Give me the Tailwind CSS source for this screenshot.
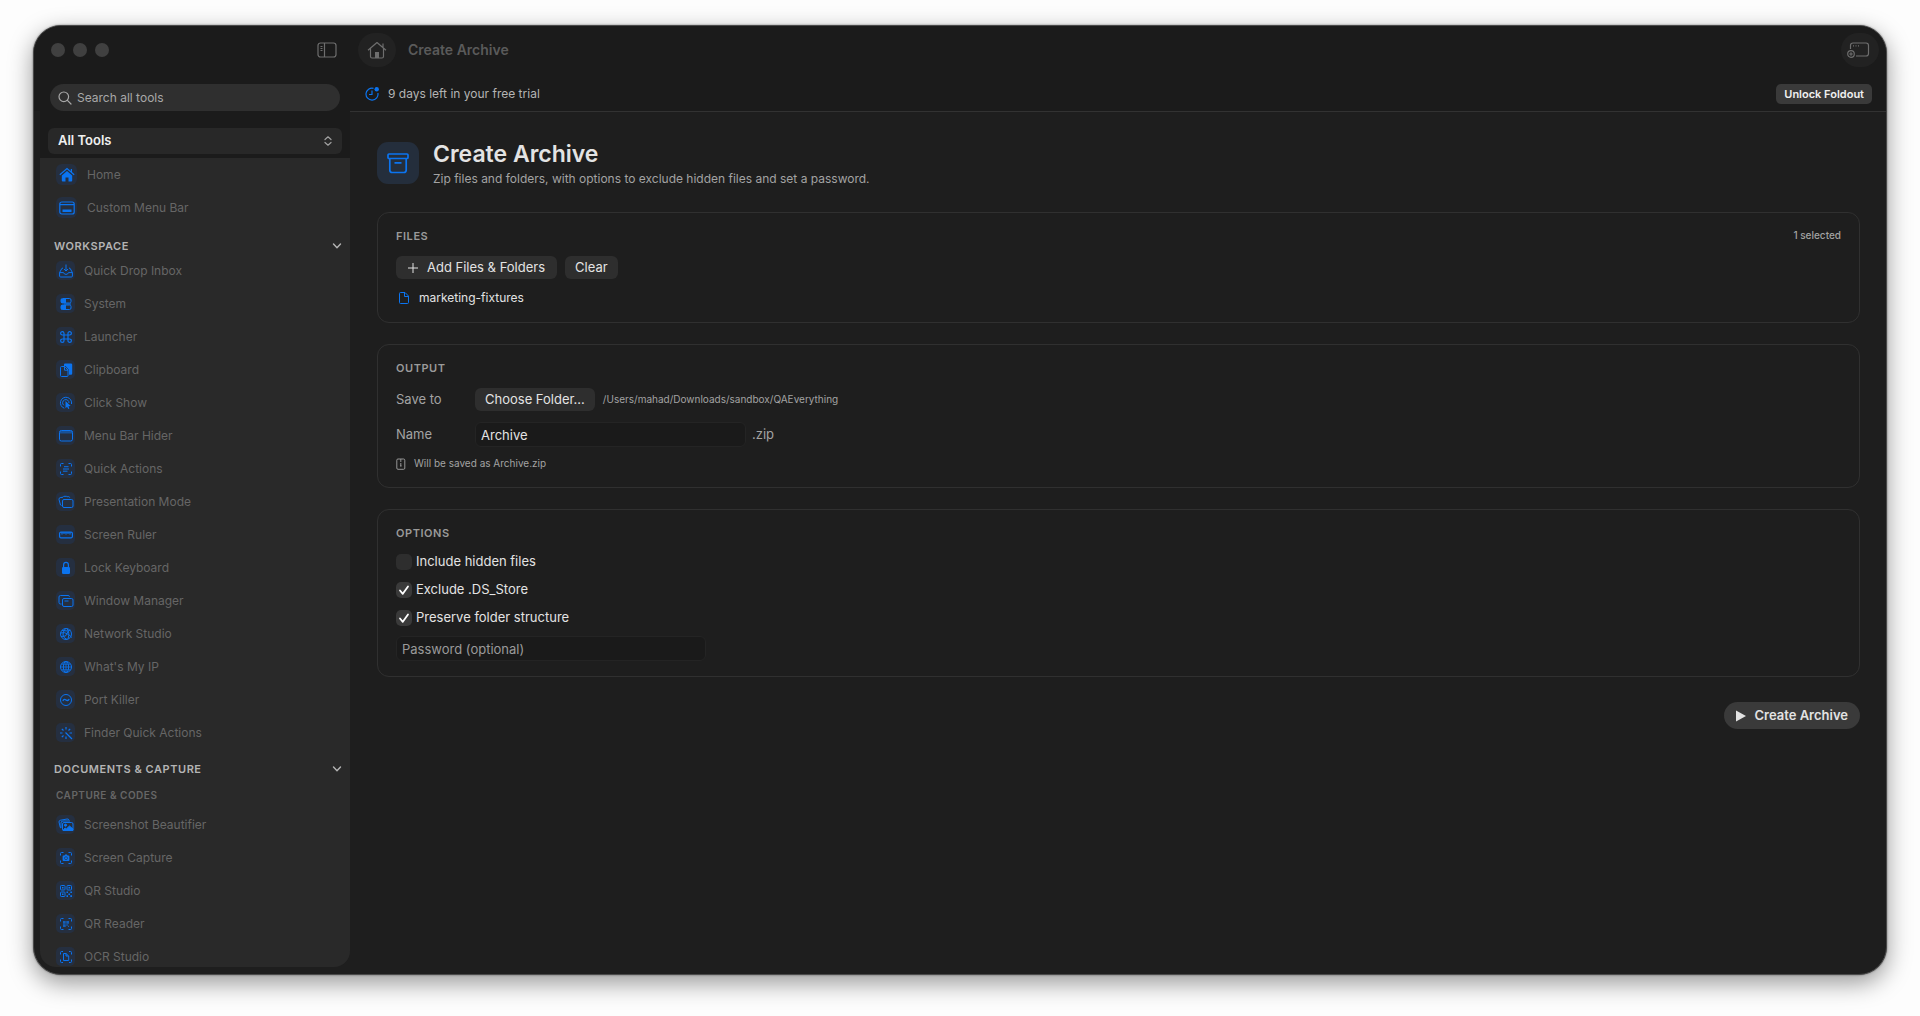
<!DOCTYPE html>
<html lang="en">
<head>
    <meta charset="UTF-8">
    <meta name="viewport" content="width=device-width, initial-scale=1.0">
    <title>Create Archive</title>
    <script src="https://cdn.jsdelivr.net/npm/@tailwindcss/browser@4"></script>
</head>
<body class="h-screen bg-[#fdfdfd] px-[33px] pt-[25px] pb-[41px] font-[Inter,'Liberation_Sans',sans-serif] text-xs text-[#e3e3e3]">
    <div class="flex h-full overflow-hidden rounded-[28px] border border-[#4a4a4a] bg-[#1e1e1e] shadow-[0_0_2px_rgba(0,0,0,0.5),0_8px_24px_rgba(0,0,0,0.4)]">

        <!-- Sidebar -->
        <aside class="flex w-[316px] shrink-0 flex-col pb-[7px]">
            <div class="h-[85px] shrink-0 bg-[#1b1b1b] pt-4 pr-2.5 pl-4">
                <div class="flex h-4 items-center gap-2 pl-px">
                    <span class="size-3.5 rounded-full bg-[#404040]"></span>
                    <span class="size-3.5 rounded-full bg-[#404040]"></span>
                    <span class="size-3.5 rounded-full bg-[#404040]"></span>
                    <button type="button" aria-label="Toggle sidebar" class="mr-[3px] ml-auto text-[#6e6e6e]">
                        <svg class="h-4 w-5" viewBox="0 0 20 16" fill="none" stroke="currentColor" stroke-width="1.2"><rect x="1" y="1" width="18" height="14" rx="2.5"/><path d="M7.500 1v14M3.500 4.500h2M3.500 6.500h2M3.500 8.500h2"/></svg>
                    </button>
                </div>
                <label class="mt-[26px] flex h-[27px] items-center gap-[5px] rounded-full bg-[#2f2f2f] px-2 text-[#a8a8a8]">
                    <svg class="size-3.5" viewBox="0 0 14 14" fill="none" stroke="currentColor" stroke-width="1.2" stroke-linecap="round"><circle cx="5.8" cy="5.8" r="4.8"/><path d="M9.4 9.4 13 13"/></svg>
                    <input type="text" aria-label="Search" placeholder="Search all tools" class="min-w-0 flex-1 bg-transparent outline-none placeholder:text-[#a8a8a8]">
                </label>
            </div>

            <div class="ml-[6px] min-h-0 flex-1 overflow-hidden rounded-b-2xl bg-[#292929]">
                <div class="h-[47px] bg-[#1b1b1b] px-2 pt-[17px]">
                    <div class="relative">
                        <select aria-label="Category" class="h-[26px] w-full appearance-none rounded-md bg-[#282828] px-2.5 text-[13px] font-semibold text-[#f0f0f0]">
                            <option>All Tools</option>
                        </select>
                        <svg class="pointer-events-none absolute top-2 right-2.5 h-2.5 w-2" viewBox="0 0 8 10" fill="none" stroke="#a0a0a0" stroke-width="1.2" stroke-linecap="round" stroke-linejoin="round"><path d="M1 3.5 4 .8l3 2.7M1 6.5l3 2.7 3-2.7"/></svg>
                    </div>
                </div>

                <nav class="text-[#666666]">
                    <ul>
                        <li><a href="#" class="flex h-[33px] items-center gap-2.5 pl-4">
                            <span class="grid size-[21px] place-items-center rounded-md bg-[#252f40] text-[#0b74f0]"><svg class="size-4" viewBox="0 0 16 16" fill="none" stroke="currentColor" stroke-width="1.2"><path d="M.8 7.8 8 1.6l7.2 6.2M12.4 2v3.5"/><path d="M8 4 2.8 8.4v5q0 1 1 1H6.5v-4h3v4h2.7q1 0 1-1v-5z" fill="currentColor" stroke="none"/></svg></span>Home</a></li>
                        <li><a href="#" class="flex h-[33px] items-center gap-2.5 pl-4">
                            <span class="grid size-[21px] place-items-center rounded-md bg-[#252f40] text-[#0b74f0]"><svg class="size-4" viewBox="0 0 16 16" fill="none" stroke="currentColor" stroke-width="1.2"><rect x=".8" y="2" width="14.4" height="12" rx="2"/><path d="M1 4.6h14"/><path d="M3.5 9.5h9v2.500h-9z" fill="currentColor" stroke="none"/></svg></span>Custom Menu Bar</a></li>
                    </ul>

                    <button type="button" class="mt-3.5 flex h-4 w-full items-center justify-between pr-2 pl-3.5 text-[11px] font-semibold tracking-wider text-[#b4b4b4]">WORKSPACE
                        <svg class="size-2.5" viewBox="0 0 10 10" fill="none" stroke="currentColor" stroke-width="1.4" stroke-linecap="round" stroke-linejoin="round"><path d="m1.5 3 3.5 3.7L8.500 3"/></svg>
                    </button>
                    <ul>
                        <li><a href="#" class="flex h-[33px] items-center gap-[9px] pl-4">
                            <span class="grid size-[19px] place-items-center rounded-[5px] bg-[#252f40] text-[#0b74f0]"><svg class="size-3.5" viewBox="0 0 14 14" fill="none" stroke="currentColor"><path d="M4 4 2.8 4.5.6 8.5V12q0 1 1 1h10.800q1 0 1-1V8.500l-2.200-4L10 4M.6 8.600H4.500Q5 10.400 7 10.400T9.500 8.600h3.900M7 .5v6.300M5 5l2 2 2-2"/></svg></span>Quick Drop Inbox</a></li>
                        <li><a href="#" class="flex h-[33px] items-center gap-[9px] pl-4">
                            <span class="grid size-[19px] place-items-center rounded-[5px] bg-[#252f40] text-[#0b74f0]"><svg class="size-3.5" viewBox="0 0 14 14" fill="none" stroke="currentColor"><rect x="2" y="1.500" width="10" height="4.500" rx="1.500"/><rect x="2" y="8" width="10" height="4.500" rx="1.500"/><path d="M2 2h5v4H2zM2 8h5v4.500H2zM5 6.500h7v1H5z" fill="currentColor" stroke="none"/></svg></span>System</a></li>
                        <li><a href="#" class="flex h-[33px] items-center gap-[9px] pl-4">
                            <span class="grid size-[19px] place-items-center rounded-[5px] bg-[#252f40] text-[#0b74f0]"><svg class="size-3.5" viewBox="0 0 14 14" fill="none" stroke="currentColor" stroke-width="1.2"><path d="M5 5V3.200A1.700 1.700 0 1 0 3.300 5H10.700A1.700 1.700 0 1 0 9 3.300V10.700A1.700 1.700 0 1 0 10.700 9H3.300A1.700 1.700 0 1 0 5 10.700z"/></svg></span>Launcher</a></li>
                        <li><a href="#" class="flex h-[33px] items-center gap-[9px] pl-4">
                            <span class="grid size-[19px] place-items-center rounded-[5px] bg-[#252f40] text-[#0b74f0]"><svg class="size-3.5" viewBox="0 0 14 14" fill="none" stroke="currentColor"><path d="M5 1.500Q5 .4 6 .4h6q1.200 0 1.200 1.200v9q0 1.200-1.200 1.200H10V7L6.500 3H5z" fill="currentColor" stroke="none"/><path d="M2.500 3.500h3.200L9 7v5.500q0 1-1 1H2.500q-1 0-1-1v-8q0-1 1-1zM5.500 3.500v3.700H9"/></svg></span>Clipboard</a></li>
                        <li><a href="#" class="flex h-[33px] items-center gap-[9px] pl-4">
                            <span class="grid size-[19px] place-items-center rounded-[5px] bg-[#252f40] text-[#0b74f0]"><svg class="size-3.5" viewBox="0 0 14 14" fill="none" stroke="currentColor"><path d="M5.300 12.200A5.600 5.600 0 1 1 12.500 8M4.800 9.300A3.200 3.200 0 1 1 10 7"/><path d="m6.500 5 5.200 5-2.300.2 1 2.300-1.100.6-1.200-2.400-1.600 1.500z" fill="currentColor" stroke="none"/></svg></span>Click Show</a></li>
                        <li><a href="#" class="flex h-[33px] items-center gap-[9px] pl-4">
                            <span class="grid size-[19px] place-items-center rounded-[5px] bg-[#252f40] text-[#0b74f0]"><svg class="size-3.5" viewBox="0 0 14 14" fill="none" stroke="currentColor"><rect x=".5" y="1.500" width="13" height="10.500" rx="1.800"/><path d="M1 2h12v2.500H1z" fill="currentColor" fill-opacity=".5" stroke="none"/></svg></span>Menu Bar Hider</a></li>
                        <li><a href="#" class="flex h-[33px] items-center gap-[9px] pl-4">
                            <span class="grid size-[19px] place-items-center rounded-[5px] bg-[#252f40] text-[#0b74f0]"><svg class="size-3.5" viewBox="0 0 14 14" fill="none" stroke="currentColor"><path d="M1.500 4.500v-2q0-1 1-1h2M9.500 1.500h2q1 0 1 1v2M12.500 9.500v2q0 1-1 1h-2M4.500 12.500h-2q-1 0-1-1v-2M5 4.700h4.500M4 7h6M4 9.200h4.500"/></svg></span>Quick Actions</a></li>
                        <li><a href="#" class="flex h-[33px] items-center gap-[9px] pl-4">
                            <span class="grid size-[19px] place-items-center rounded-[5px] bg-[#252f40] text-[#0b74f0]"><svg class="size-4" viewBox="0 0 16 16" fill="none" stroke="currentColor"><rect x="4.500" y="5.500" width="10.500" height="8" rx="1.500"/><path d="m3.500 11.500-1-.5L1 5.500Q.8 4 2.200 3.600L5 3.200l.8-.9h2.500l.9.400 1.300-.1q1 0 1.200 1"/></svg></span>Presentation Mode</a></li>
                        <li><a href="#" class="flex h-[33px] items-center gap-[9px] pl-4">
                            <span class="grid size-[19px] place-items-center rounded-[5px] bg-[#252f40] text-[#0b74f0]"><svg class="size-3.5" viewBox="0 0 14 14" fill="none" stroke="currentColor" stroke-width="1.200"><rect x=".6" y="4.200" width="12.800" height="5.600" rx="1.200"/><path d="M3 4v2.500M5 4v2M7 4v2.500M9 4v2M11 4v2.500"/></svg></span>Screen Ruler</a></li>
                        <li><a href="#" class="flex h-[33px] items-center gap-[9px] pl-4">
                            <span class="grid size-[19px] place-items-center rounded-[5px] bg-[#252f40] text-[#0b74f0]"><svg class="size-3.5" viewBox="0 0 14 14" fill="none" stroke="currentColor"><rect x="3" y="6" width="8" height="7" rx="1.200" fill="currentColor" stroke="none"/><path d="M4.600 6.500V4a2.400 2.600 0 0 1 4.800 0v2.500" stroke-width="1.200"/></svg></span>Lock Keyboard</a></li>
                        <li><a href="#" class="flex h-[33px] items-center gap-[9px] pl-4">
                            <span class="grid size-[19px] place-items-center rounded-[5px] bg-[#252f40] text-[#0b74f0]"><svg class="size-4" viewBox="0 0 16 16" fill="none" stroke="currentColor"><rect x="4.500" y="5.500" width="10.500" height="8" rx="1.500"/><path d="M3.500 11h-1Q1 11 1 9.500V4q0-1.500 1.500-1.500H10q1.500 0 1.500 1.200M6.500 8h4"/></svg></span>Window Manager</a></li>
                        <li><a href="#" class="flex h-[33px] items-center gap-[9px] pl-4">
                            <span class="grid size-[19px] place-items-center rounded-[5px] bg-[#252f40] text-[#0b74f0]"><svg class="size-3.5" viewBox="0 0 14 14" fill="none" stroke="currentColor"><circle cx="7" cy="7" r="5.500"/><path d="M6.500 1.500Q3.500 5 4 8t4 4.500M1.500 6q4-1.500 8 1.500t2.500 3M3 3.500l6 .5 2.500-1M8 1.500q3 4 1 10.500M2 9.500l4.500-.5L9 4.500"/></svg></span>Network Studio</a></li>
                        <li><a href="#" class="flex h-[33px] items-center gap-[9px] pl-4">
                            <span class="grid size-[19px] place-items-center rounded-[5px] bg-[#252f40] text-[#0b74f0]"><svg class="size-3.5" viewBox="0 0 14 14" fill="none" stroke="currentColor"><circle cx="7" cy="7" r="5.500"/><ellipse cx="7" cy="7" rx="2.600" ry="5.500"/><path d="M7 1.500v11M1.500 7h11M2.500 4.200h9M2.500 9.800h9" stroke-width=".8"/></svg></span>What's My IP</a></li>
                        <li><a href="#" class="flex h-[33px] items-center gap-[9px] pl-4">
                            <span class="grid size-[19px] place-items-center rounded-[5px] bg-[#252f40] text-[#0b74f0]"><svg class="size-3.5" viewBox="0 0 14 14" fill="none" stroke="currentColor"><circle cx="7" cy="7" r="5.500"/><path d="M3.800 7.800C5 5.800 6 6.300 7 7s2 1 3.200-.8" stroke-width="1.400"/></svg></span>Port Killer</a></li>
                        <li><a href="#" class="flex h-[33px] items-center gap-[9px] pl-4">
                            <span class="grid size-[19px] place-items-center rounded-[5px] bg-[#252f40] text-[#0b74f0]"><svg class="size-3.5" viewBox="0 0 14 14" fill="none" stroke="currentColor" stroke-width="1.200"><path d="M6.500 6.500 13 13M7 1v2.500M7 10.500V13M1 7h2.500M10.500 7H13M2.800 2.800l1.700 1.700M11.200 2.800 9.500 4.500M2.800 11.200l1.700-1.700"/></svg></span>Finder Quick Actions</a></li>
                    </ul>

                    <button type="button" class="mt-3 flex h-4 w-full items-center justify-between pr-2 pl-3.5 text-[11px] font-semibold tracking-wider text-[#b4b4b4]">DOCUMENTS &amp; CAPTURE
                        <svg class="size-2.5" viewBox="0 0 10 10" fill="none" stroke="currentColor" stroke-width="1.4" stroke-linecap="round" stroke-linejoin="round"><path d="m1.5 3 3.5 3.700L8.500 3"/></svg>
                    </button>
                    <h3 class="mt-2.5 mb-[5px] pl-4 text-[10px] leading-4 font-semibold tracking-wider">CAPTURE &amp; CODES</h3>
                    <ul>
                        <li><a href="#" class="flex h-[33px] items-center gap-[9px] pl-4">
                            <span class="grid size-[19px] place-items-center rounded-[5px] bg-[#252f40] text-[#0b74f0]"><svg class="size-4" viewBox="0 0 16 16" fill="none" stroke="currentColor"><path d="m3 11-.7-.5L1 5q0-1.500 1.200-1.700L9 2q1.500-.2 2 1M3 11V6q0-2 2-2h7"/><rect x="4.500" y="5.500" width="10.500" height="8" rx="1.500"/><circle cx="7.500" cy="8.200" r="1.100" fill="currentColor"/><path d="m5 13.500 2-2.500 1.500.8L11.500 9l3.500 3v1.500z" fill="currentColor"/></svg></span>Screenshot Beautifier</a></li>
                        <li><a href="#" class="flex h-[33px] items-center gap-[9px] pl-4">
                            <span class="grid size-[19px] place-items-center rounded-[5px] bg-[#252f40] text-[#0b74f0]"><svg class="size-3.5" viewBox="0 0 14 14" fill="none" stroke="currentColor"><path d="M1.500 4.500v-2q0-1 1-1h2M9.500 1.500h2q1 0 1 1v2M12.500 9.500v2q0 1-1 1h-2M4.500 12.500h-2q-1 0-1-1v-2"/><path d="M4.500 4.500h1l.6-.9h1.800l.6.9h1q.9 0 .9.900v3.600q0 .9-.9.900h-5q-.9 0-.9-.9V5.400q0-.9.9-.9z" fill="currentColor" stroke="none"/><circle cx="7" cy="7.200" r="1.500" stroke="#252f40" stroke-width=".6"/></svg></span>Screen Capture</a></li>
                        <li><a href="#" class="flex h-[33px] items-center gap-[9px] pl-4">
                            <span class="grid size-[19px] place-items-center rounded-[5px] bg-[#252f40] text-[#0b74f0]"><svg class="size-3.5" viewBox="0 0 14 14" fill="none" stroke="currentColor"><rect x="1.500" y="1.500" width="4.500" height="4.500" rx=".8"/><rect x="8" y="1.500" width="4.500" height="4.500" rx=".8"/><rect x="1.500" y="8" width="4.500" height="4.500" rx=".8"/><path d="M3 3h1.500v1.500H3zM9.500 3H11v1.500H9.500zM3 9.500h1.500V11H3zM7.500 7.500H9V9H7.500zM11.300 7.500H13V9h-1.700zM9.400 9.400H11V11H9.400zM7.500 11.300H9V13H7.500zM11.300 11.300H13V13h-1.700z" fill="currentColor" stroke="none"/></svg></span>QR Studio</a></li>
                        <li><a href="#" class="flex h-[33px] items-center gap-[9px] pl-4">
                            <span class="grid size-[19px] place-items-center rounded-[5px] bg-[#252f40] text-[#0b74f0]"><svg class="size-3.5" viewBox="0 0 14 14" fill="none" stroke="currentColor"><path d="M1.500 4.500v-2q0-1 1-1h2M9.500 1.500h2q1 0 1 1v2M12.500 9.500v2q0 1-1 1h-2M4.500 12.500h-2q-1 0-1-1v-2"/><path d="M4 4h2.700v2.700H4zM7.300 4H10v2.700H7.300zM4 7.300h2.700V10H4zM7.300 7.300h1.500v1.500H7.300zM9 8.800h1V10H9z" fill="currentColor" fill-opacity=".7" stroke="none"/></svg></span>QR Reader</a></li>
                        <li><a href="#" class="flex h-[33px] items-center gap-[9px] pl-4">
                            <span class="grid size-[19px] place-items-center rounded-[5px] bg-[#252f40] text-[#0b74f0]"><svg class="size-3.5" viewBox="0 0 14 14" fill="none" stroke="currentColor"><path d="M1.500 4.500v-2q0-1 1-1H4M10 1.500h1.500q1 0 1 1v2M12.500 9.500v2q0 1-1 1H10M4 12.500H2.500q-1 0-1-1v-2M4.500 3.500H7L9.700 6v4.500H4.500zM7 3.500V6h2.700"/></svg></span>OCR Studio</a></li>
                    </ul>
                </nav>
            </div>
        </aside>

        <!-- Main -->
        <div class="flex min-w-0 flex-1 flex-col">
            <header class="h-[86px] shrink-0 border-b border-[#323232] bg-[#1b1b1b] pt-[7px]">
                <div class="flex items-center pr-[7px] pl-2">
                    <button type="button" aria-label="Home" class="grid h-[34px] w-[38px] place-items-center rounded-full bg-[#222222] text-[#6e6e6e]">
                        <svg class="size-5" viewBox="0 0 20 20" fill="none" stroke="currentColor" stroke-width="1.2" stroke-linejoin="round"><path d="M1 10.300 10 2.500l9 7.800M3.500 8.500v8q0 1.500 1.500 1.500h10q1.500 0 1.500-1.500v-8M16 3.500V7"/><path d="M8 12h4v6H8z" fill="currentColor" stroke="none"/></svg>
                    </button>
                    <span class="ml-3 text-sm font-semibold text-[#5a5a5a]">Create Archive</span>
                    <button type="button" aria-label="New window" class="ml-auto grid h-[34px] w-[38px] place-items-center rounded-full bg-[#222222] pr-1 text-[#6e6e6e]">
                        <svg class="h-4 w-6" viewBox="0 0 24 16" fill="none" stroke="currentColor" stroke-width="1.2"><path d="M4.500 7V3.500Q4.500 1 7 1h13q2.500 0 2.500 2.500v8q0 2.500-2.500 2.500H10M7 3.800h1M9.500 3.800h1M12 3.800h1"/><circle cx="5" cy="12" r="3.300"/><path d="M5 10.200v3.600M3.200 12h3.600"/></svg>
                    </button>
                </div>
                <div class="mt-[17px] flex h-5 items-center pr-3.5 pl-[15px]">
                    <svg class="size-3.5" viewBox="0 0 14 14" fill="none" stroke="#0b74f0" stroke-width="1.2"><path d="M8.500 1.300A6 6 0 1 0 12.900 6M7 3.500V7.500H4"/><circle cx="11.700" cy="2.300" r="2.200" fill="#0b74f0" stroke="none"/></svg>
                    <span class="ml-[9px] text-[#b4b4b4]">9 days left in your free trial</span>
                    <button type="button" class="ml-auto h-5 rounded-[5px] bg-[#3a3a3a] px-2 text-[11px] font-semibold text-[#f0f0f0]">Unlock Foldout</button>
                </div>
            </header>

            <main class="px-[26px] pt-[30px] pl-[27px]">
                <div class="flex items-start gap-3.5">
                    <div class="grid size-[42px] place-items-center rounded-[11px] bg-[#242e3c] text-[#0b74f0]">
                        <svg class="size-6" viewBox="0 0 24 24" fill="none" stroke="currentColor" stroke-width="1.700" stroke-linejoin="round"><rect x="2" y="3" width="20" height="4.500" rx="1"/><path d="M3.800 7.500V19q0 2.500 2.500 2.500h11.400q2.500 0 2.500-2.500V7.500M8.500 11.800h7"/></svg>
                    </div>
                    <div>
                        <h1 class="text-[23px] leading-6 font-semibold">Create Archive</h1>
                        <p class="mt-[3px] leading-5 text-[#a3a3a3]">Zip files and folders, with options to exclude hidden files and set a password.</p>
                    </div>
                </div>

                <section class="mt-[23px] rounded-xl border border-[#303030] px-[18px] pt-[15px] pb-3.5">
                    <div class="flex h-4 items-center justify-between">
                        <h2 class="text-[11px] font-semibold tracking-wider text-[#9a9a9a]">FILES</h2>
                        <span class="text-[10px] font-medium text-[#a3a3a3]">1 selected</span>
                    </div>
                    <div class="mt-3 flex gap-2">
                        <button type="button" class="flex h-[23px] items-center gap-[9px] rounded-md bg-[#2e2e2e] px-3 text-[13px]">
                            <svg class="size-2.5" viewBox="0 0 10 10" stroke="currentColor"><path d="M5 0v10M0 5h10"/></svg>Add Files &amp; Folders
                        </button>
                        <button type="button" class="h-[23px] rounded-md bg-[#2e2e2e] px-2.5 text-[13px]">Clear</button>
                    </div>
                    <div class="mt-[9px] flex h-5 items-center gap-2.5 pl-[3px]">
                        <svg class="h-3 w-2.5" viewBox="0 0 10 12" fill="none" stroke="#0b74f0"><path d="M1.500.5H6L9.500 4v6.500q0 1-1 1h-7q-1 0-1-1v-9q0-1 1-1zM5.500.5v4h4"/></svg>marketing-fixtures
                    </div>
                </section>

                <section class="mt-[21px] rounded-xl border border-[#303030] px-[18px] pt-[15px] pb-3.5">
                    <h2 class="text-[11px] leading-4 font-semibold tracking-wider text-[#9a9a9a]">OUTPUT</h2>
                    <div class="mt-3 flex h-[23px] items-center text-[13px] text-[#a3a3a3]">
                        <span class="w-[79px]">Save to</span>
                        <button type="button" class="h-[23px] rounded-md bg-[#2e2e2e] px-2.5 text-[#e3e3e3]">Choose Folder...</button>
                        <span class="ml-2 text-[10px]">/Users/mahad/Downloads/sandbox/QAEverything</span>
                    </div>
                    <div class="mt-[11px] flex h-[25px] items-center text-[13px] text-[#a3a3a3]">
                        <label for="name" class="w-[79px]">Name</label>
                        <input type="text" id="name" value="Archive" class="mr-1.5 h-[25px] w-[271px] rounded-md border border-[#242424] bg-[#1a1a1a] px-[5px] text-[#e3e3e3] outline-none">.zip
                    </div>
                    <p class="mt-2 flex h-[18px] items-center gap-2 text-[10px] text-[#a3a3a3]">
                        <svg class="h-3 w-2.5" viewBox="0 0 10 12" fill="none" stroke="currentColor" stroke-width=".9"><rect x=".8" y="1" width="8" height="10.300" rx="1.200"/><path d="M4.800 1v3M4.800 5v3M4 8h1.600"/></svg>Will be saved as Archive.zip
                    </p>
                </section>

                <section class="mt-[21px] rounded-xl border border-[#303030] px-[18px] py-[15px]">
                    <h2 class="text-[11px] leading-4 font-semibold tracking-wider text-[#9a9a9a]">OPTIONS</h2>
                    <div class="mt-[11px] flex flex-col items-start gap-2 text-[13px]">
                        <label class="grid h-5 grid-cols-[16px_auto] items-center gap-x-1">
                            <input type="checkbox" class="peer col-start-1 row-start-1 size-4 appearance-none rounded-[5px] bg-[#2e2e2e] checked:bg-[#3a3a3a]">
                            <svg class="pointer-events-none col-start-1 row-start-1 hidden size-4 peer-checked:block" viewBox="0 0 16 16" fill="none" stroke="#ffffff" stroke-width="1.800" stroke-linecap="round" stroke-linejoin="round"><path d="m4 8.500 2.800 3.300L12 4.500"/></svg>
                            <span class="col-start-2 row-start-1">Include hidden files</span>
                        </label>
                        <label class="grid h-5 grid-cols-[16px_auto] items-center gap-x-1">
                            <input type="checkbox" checked class="peer col-start-1 row-start-1 size-4 appearance-none rounded-[5px] bg-[#2e2e2e] checked:bg-[#3a3a3a]">
                            <svg class="pointer-events-none col-start-1 row-start-1 hidden size-4 peer-checked:block" viewBox="0 0 16 16" fill="none" stroke="#ffffff" stroke-width="1.800" stroke-linecap="round" stroke-linejoin="round"><path d="m4 8.500 2.800 3.300L12 4.500"/></svg>
                            <span class="col-start-2 row-start-1">Exclude .DS_Store</span>
                        </label>
                        <label class="grid h-5 grid-cols-[16px_auto] items-center gap-x-1">
                            <input type="checkbox" checked class="peer col-start-1 row-start-1 size-4 appearance-none rounded-[5px] bg-[#2e2e2e] checked:bg-[#3a3a3a]">
                            <svg class="pointer-events-none col-start-1 row-start-1 hidden size-4 peer-checked:block" viewBox="0 0 16 16" fill="none" stroke="#ffffff" stroke-width="1.800" stroke-linecap="round" stroke-linejoin="round"><path d="m4 8.500 2.800 3.300L12 4.500"/></svg>
                            <span class="col-start-2 row-start-1">Preserve folder structure</span>
                        </label>
                        <input type="password" aria-label="Password" placeholder="Password (optional)" class="h-[25px] w-[310px] rounded-md border border-[#242424] bg-[#1a1a1a] px-[5px] outline-none placeholder:text-[#9a9a9a]">
                    </div>
                </section>

                <div class="mt-[25px] flex justify-end">
                    <button type="button" class="flex h-[27px] items-center gap-2 rounded-full bg-[#3a3a3a] px-3 text-[13px] font-semibold">
                        <svg class="h-3 w-2.5" viewBox="0 0 10 12" fill="currentColor"><path d="M0 .5v11L10 6z"/></svg>Create Archive
                    </button>
                </div>
            </main>
        </div>
    </div>
</body>
</html>
